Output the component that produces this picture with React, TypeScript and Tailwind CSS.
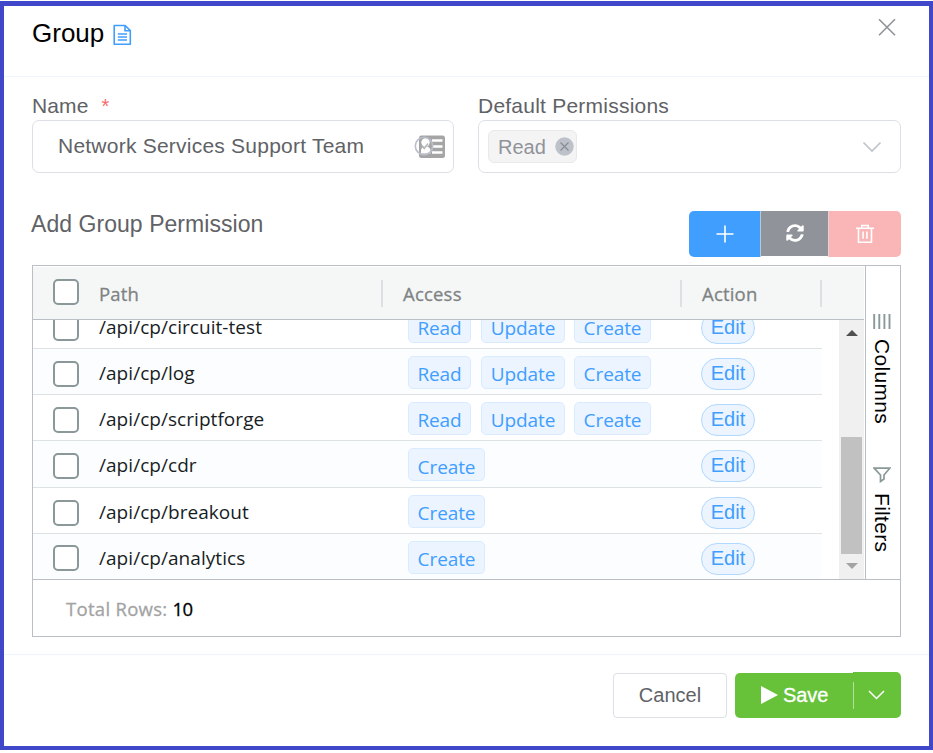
import React from "react";

const SEGOE = "font-['Open_Sans','Noto_Sans',sans-serif]";

type Row = { path: string; access: string[]; height: string; alt: boolean; box: string };

const rows: Row[] = [
  { path: "/api/cp/circuit-test", access: ["Read", "Update", "Create"], height: "h-[46px]", alt: false, box: "mt-[4px]" },
  { path: "/api/cp/log", access: ["Read", "Update", "Create"], height: "h-[46px]", alt: true, box: "mt-[5px]" },
  { path: "/api/cp/scriptforge", access: ["Read", "Update", "Create"], height: "h-[46px]", alt: false, box: "mt-[5px]" },
  { path: "/api/cp/cdr", access: ["Create"], height: "h-[47px]", alt: true, box: "mt-[4px]" },
  { path: "/api/cp/breakout", access: ["Create"], height: "h-[46px]", alt: false, box: "mt-[5px]" },
  { path: "/api/cp/analytics", access: ["Create"], height: "h-[46px]", alt: true, box: "mt-[3px]" },
];

function Checkbox() {
  return <span className="block h-[26px] w-[26px] shrink-0 rounded-[5px] border-2 border-[#8a9899] bg-white" />;
}

function Tag({ label }: { label: string }) {
  const width = label === "Read" ? "w-[63px] mr-[10px]" : label === "Update" ? "w-[84px] mr-[9px]" : "w-[77px]";
  return (
    <span
      className={`${width} flex h-[33px] shrink-0 items-center justify-center rounded-[5px] border border-[#d9ecff] bg-[#ecf4ff] pt-[5px] text-[19px] leading-none tracking-[-0.1px] text-[#409eff]`}
    >
      {label}
    </span>
  );
}

function DocumentIcon() {
  return (
    <svg width="20" height="22" viewBox="0 0 20 22" fill="none" stroke="#409eff" strokeWidth="1.6">
      <path d="M2.200 1.500H13.200L18.300 6.600V20.200H2.200Z" strokeLinejoin="round" />
      <path d="M13 1.500V6.800H18.300" />
      <path d="M5.800 10H15M5.800 13H15M5.800 16H15" />
    </svg>
  );
}

function ContactIcon() {
  return (
    <svg width="32" height="26" viewBox="0 0 32 26">
      <rect x="5" y="1.500" width="26" height="22.500" rx="2.500" fill="#a5a5a5" />
      <path d="M18 6.500H28.500M18 12.500H28.500M18 18.500H28.500" stroke="#fff" strokeWidth="2.400" />
      <circle cx="11.500" cy="8.500" r="4.200" fill="#fff" />
      <path d="M7 19.500V17Q7 12.500 11.500 12.500Q16.500 12.500 16.500 17V19.500Z" fill="#fff" />
      <circle cx="10" cy="12" r="8.700" fill="none" stroke="#b9bfcc" strokeWidth="1.600" />
      <path d="M7.500 11.500L10.200 14.500L14 9.500" stroke="#b5b8be" strokeWidth="1.500" fill="none" />
    </svg>
  );
}

function RefreshIcon() {
  return (
    <svg width="18" height="18" viewBox="0 0 512 512" fill="#fff">
      <path d="M370.700 133.300C339.500 104 298.900 88 255.800 88c-77.500.1-144.300 53.200-162.800 126.900-1.300 5.400-6.100 9.100-11.700 9.100H24.100c-7.500 0-13.200-6.800-11.800-14.200C33.900 94.900 134.800 8 256 8c66.400 0 126.800 26.100 171.300 68.700L463 41c15.100-15.100 41-4.400 41 17v134c0 13.300-10.700 24-24 24H346c-21.400 0-32.100-25.900-17-41l41.700-41.700zM32 296h134c21.400 0 32.100 25.900 17 41l-41.800 41.800c31.300 29.300 71.800 45.300 114.900 45.300 77.400-.1 144.300-53.100 162.800-126.800 1.300-5.400 6.100-9.100 11.700-9.100h57.300c7.500 0 13.200 6.800 11.800 14.200C478.100 417.100 377.200 504 256 504c-66.400 0-126.800-26.100-171.300-68.700L49 471c-15.100 15.100-41 4.400-41-17V320c0-13.300 10.700-24 24-24z" />
    </svg>
  );
}

function TrashIcon() {
  return (
    <svg width="20" height="20" viewBox="0 0 20 20" fill="none" stroke="#fff" strokeWidth="1.600">
      <path d="M1 4.200H19M6.800 4V1.500H13.200V4M3.500 4.500V18.200H16.500V4.500M8.100 7.500V14.700M11.900 7.500V14.700" />
    </svg>
  );
}

export default function App() {
  return (
    <div className="h-[753px] w-[933px] bg-white pt-px font-['Liberation_Sans',Arial,sans-serif] text-[#606266]">
      <div className="flex h-[749px] flex-col border-x-4 border-t-[5px] border-b-4 border-[#4147c9]">
        <header className="flex h-[71px] shrink-0 items-start justify-between border-b border-[#ecf5ff] pl-7 pr-8">
          <div className="flex items-center pt-3">
            <h1 className="text-[26px] leading-[30px] text-black">Group</h1>
            <span className="ml-2 mt-[3px]">
              <DocumentIcon />
            </span>
          </div>
          <svg className="mt-[11px]" width="20" height="20" viewBox="0 0 20 20" stroke="#909399" strokeWidth="1.600">
            <path d="M2 2.200L18 18.200M18 2.200L2 18.200" />
          </svg>
        </header>

        <main className="flex h-[577px] shrink-0 flex-col px-7">
          <div className="flex gap-6 pt-4">
            <div className="w-[422px]">
              <label className="flex h-[27px] items-center pb-px text-[21px] leading-[26px] tracking-[0.1px]">
                Name<span className="ml-[13px] text-[20px] text-[#f56c6c]">*</span>
              </label>
              <div className="flex h-[53px] items-center justify-between rounded-[7px] border border-[#dcdfe6] pl-[25px] pr-[7px]">
                <span className="pb-[2px] text-[21px] leading-[26px] tracking-[0.23px]">Network Services Support Team</span>
                <ContactIcon />
              </div>
            </div>
            <div className="w-[423px]">
              <label className="flex h-[27px] items-center pb-px text-[21px] leading-[26px] tracking-[0.23px]">Default Permissions</label>
              <div className="flex h-[53px] items-center justify-between rounded-[7px] border border-[#dcdfe6] pl-[9px] pr-[18px]">
                <span className="flex h-[33px] w-[89px] items-center justify-between rounded-[6px] border border-[#e9e9eb] bg-[#f4f4f5] pl-[9px] pr-[2px] text-[20px] text-[#909399]">
                  Read
                  <svg width="19" height="19" viewBox="0 0 19 19">
                    <circle cx="9.500" cy="9.500" r="9.200" fill="#bcc1ca" />
                    <path d="M5.500 5.500L13.500 13.500M13.500 5.500L5.500 13.500" stroke="#878b93" strokeWidth="1.100" />
                  </svg>
                </span>
                <svg width="20" height="12" viewBox="0 0 20 12" fill="none" stroke="#c0c4cc" strokeWidth="1.700">
                  <path d="M1.500 1.500L10 10L18.500 1.500" />
                </svg>
              </div>
            </div>
          </div>

          <div className="mt-[38px] flex h-[46px] items-start justify-between">
            <h2 className="-ml-px text-[23px] leading-[26px] tracking-[0.05px]">Add Group Permission</h2>
            <div className="flex h-[46px]">
              <button className="flex w-[72px] items-center justify-center rounded-l-[5px] border-r border-[#b3c9df] bg-[#409eff] pb-px pl-px">
                <svg width="18" height="18" viewBox="0 0 18 18" stroke="#fff" strokeWidth="1.600">
                  <path d="M9 .5V17.500M.5 9H17.500" />
                </svg>
              </button>
              <button className="flex h-[45px] w-[67px] items-center justify-center bg-[#909399] pb-px">
                <RefreshIcon />
              </button>
              <button className="flex w-[73px] items-center justify-center rounded-r-[5px] border-l border-[#e5d0d4] bg-[#fab6b6] pb-px pr-px">
                <TrashIcon />
              </button>
            </div>
          </div>

          <section className={`mt-2 flex h-[372px] w-[869px] flex-col border border-[#babfc7] ${SEGOE}`}>
            <div className="flex h-[314px] shrink-0 border-b border-[#babfc7]">
              <div className="flex w-[831px] flex-col">
                <div className="flex h-[54px] shrink-0 items-center border-b border-t border-b-[#babfc7] border-t-white bg-[#f5f7f7] pl-5 text-[18.500px] font-medium tracking-[0.2px] text-[#7f8383] [-webkit-text-stroke:0.3px_#7f8383]">
                  <span className="-mt-[2px]">
                    <Checkbox />
                  </span>
                  <div className="ml-5 flex h-[27px] w-[284px] items-center border-r-2 border-[#dddfe2] pt-px">Path</div>
                  <div className="flex h-[27px] w-[299px] items-center border-r-2 border-[#dddfe2] pl-5 pt-px">Access</div>
                  <div className="flex h-[27px] w-[140px] items-center border-r-2 border-[#dddfe2] pl-5 pt-px">Action</div>
                </div>
                <div className="flex h-[259px] overflow-hidden">
                  <div className="-mt-[17px] w-[789px] shrink-0">
                    {rows.map((row) => (
                      <div
                        key={row.path}
                        className={`${row.height} ${row.alt ? "bg-[#fcfdfe]" : "bg-white"} flex items-center border-b border-[#dde2e4] pl-5`}
                      >
                        <span className={row.box}>
                          <Checkbox />
                        </span>
                        <span className="ml-5 w-[309px] pt-[3px] text-[19px] leading-none tracking-[0.05px] text-[#181d1f]">{row.path}</span>
                        <div className="flex w-[293px] pt-px">
                          {row.access.map((label) => (
                            <Tag key={label} label={label} />
                          ))}
                        </div>
                        <button className="mt-[4px] flex h-[32px] w-[54px] items-center justify-center rounded-full border border-[#b3d8ff] bg-[#ecf4ff] pb-[2px] font-['Liberation_Sans',Arial,sans-serif] text-[20px] leading-none text-[#409eff]">
                          Edit
                        </button>
                      </div>
                    ))}
                  </div>
                  <div className="ml-[17px] flex h-[259px] w-[25px] shrink-0 flex-col items-center bg-[#f0f0f0] pt-[10px]">
                    <svg className="shrink-0" width="12" height="6" viewBox="0 0 12 6">
                      <path d="M0 6L6 0L12 6Z" fill="#505050" />
                    </svg>
                    <div className="mt-[101px] h-[117px] w-[21px] shrink-0 bg-[#c1c1c1]" />
                    <svg className="mt-[9px] shrink-0" width="12" height="6" viewBox="0 0 12 6">
                      <path d="M0 0L6 6L12 0Z" fill="#a3a3a3" />
                    </svg>
                  </div>
                </div>
              </div>
              <aside className="ml-px flex w-[36px] flex-col items-center border-l border-[#babfc7] pt-12 font-['Liberation_Sans',Arial,sans-serif] text-[21px] leading-[24px] tracking-[0.3px] text-black">
                <svg className="mr-[2px] shrink-0" width="18" height="16" viewBox="0 0 18 16" stroke="#8a9899" strokeWidth="1.900">
                  <path d="M1.200 0V15M6.300 0V15M11.400 0V15M16.500 0V15" />
                </svg>
                <span className="mr-[2px] mt-[9px] h-[88px] [writing-mode:vertical-rl]">Columns</span>
                <svg className="mr-[2px] mt-[40px] shrink-0" width="18" height="16" viewBox="0 0 18 16" fill="none" stroke="#8a9899" strokeWidth="1.700">
                  <path d="M1.200 1.200H16.800L11 8V12L7.500 14.500V8Z" />
                </svg>
                <span className="mr-[2px] mt-[10px] [writing-mode:vertical-rl]">Filters</span>
              </aside>
            </div>
            <div className="flex flex-1 items-center pl-[33px] pt-px text-[18.500px] font-medium tracking-[0.3px] text-[#a3a3a3] [-webkit-text-stroke:0.3px]">
              <span>Total Rows:</span>
              <span className="ml-[5px] tracking-[-0.5px] text-black">10</span>
            </div>
          </section>
        </main>

        <footer className="flex flex-1 items-start justify-end border-t border-[#ecf5ff] pr-7 pt-[17px] text-[20px]">
          <button className="mt-px flex h-[45px] w-[114px] items-center justify-center rounded-[4px] border border-[#dcdfe6] pb-[2px] leading-none text-[#606266]">
            Cancel
          </button>
          <div className="ml-2 flex h-[46px] items-end text-white">
            <button className="flex h-[45px] w-[118px] items-center rounded-l-[5px] bg-[#67c23a] pb-[2px] pl-[26px] leading-none">
              <svg width="17" height="18" viewBox="0 0 17 18" fill="#fff">
                <path d="M0 0L17 9L0 18Z" />
              </svg>
              <span className="ml-[5px] tracking-[-0.1px] [-webkit-text-stroke:0.3px_white]">Save</span>
            </button>
            <button className="flex h-[46px] w-[48px] items-center rounded-r-[5px] bg-[#67c23a]">
              <span className="h-[27px] w-px bg-[#b3e09c]" />
              <svg className="ml-[14px]" width="17" height="10" viewBox="0 0 17 10" fill="none" stroke="#fff" strokeWidth="1.500">
                <path d="M1 1L8.500 8.500L16 1" />
              </svg>
            </button>
          </div>
        </footer>
      </div>
    </div>
  );
}
